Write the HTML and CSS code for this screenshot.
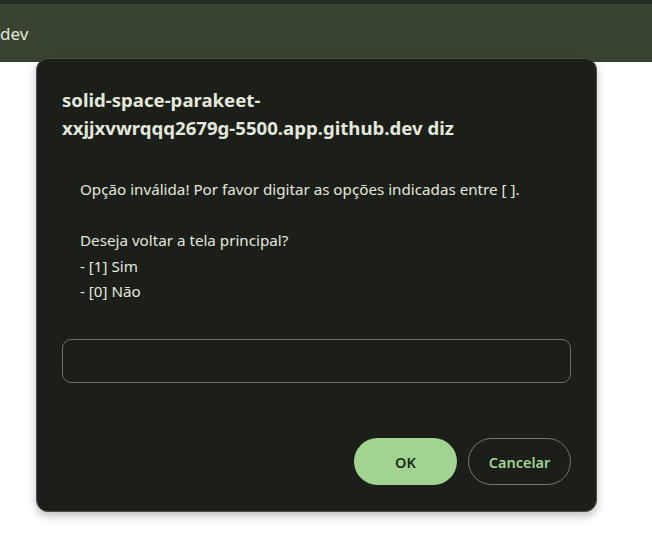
FILE: index.html
```html
<!DOCTYPE html>
<html lang="pt">
<head>
<meta charset="utf-8">
<link rel="stylesheet" href="styles.css">
</head>
<body>
<div class="topstripe"></div>
<header class="bar"><span class="bar-text">dev</span></header>
<main class="page"></main>
<div class="dialog" role="dialog">
  <h1 class="title">solid-space-parakeet-<br>xxjjxvwrqqq2679g-5500.app.github.dev diz</h1>
  <div class="message">
    <p>Opção inválida! Por favor digitar as opções indicadas entre [ ].</p>
    <p class="blank">&nbsp;</p>
    <p>Deseja voltar a tela principal?</p>
    <p>- [1] Sim</p>
    <p>- [0] Não</p>
  </div>
  <input class="field" type="text">
  <div class="actions">
    <button class="btn btn-ok">OK</button>
    <button class="btn btn-cancel">Cancelar</button>
  </div>
</div>
</body>
</html>
```
FILE: styles.css
```css
html, body {
  margin: 0;
  padding: 0;
  background: #ffffff;
  font-family: "Noto Sans", "Open Sans", sans-serif;
}
.topstripe {
  height: 4px;
  background: #252a22;
}
.bar {
  height: 58px;
  background: #384331;
  display: flex;
  align-items: center;
  box-sizing: border-box;
  padding-bottom: 0;
}
.bar-text {
  color: #e2e6dd;
  font-size: 17px;
  margin-left: 0;
}
.dialog {
  position: absolute;
  left: 36px;
  top: 58px;
  width: 561px;
  height: 454px;
  box-sizing: border-box;
  background: #1b1e19;
  border: 1px solid #4a5046;
  border-radius: 12px;
  box-shadow: 0 4px 8px rgba(0,0,0,0.25);
  padding: 27px 25px 26px 25px;
  display: flex;
  flex-direction: column;
}
.title {
  margin: 0;
  color: #e3e8dc;
  font-size: 18.6px;
  font-weight: 700;
  line-height: 28px;
}
.message {
  margin-top: 35px;
  padding-left: 18px;
  color: #e3e8dc;
  font-size: 15.2px;
  line-height: 25.5px;
}
.message p {
  margin: 0;
}
.field {
  margin-top: 34px;
  height: 44px;
  box-sizing: border-box;
  background: transparent;
  border: 1px solid #6b6f66;
  border-radius: 9px;
  width: 100%;
}
.actions {
  margin-top: auto;
  display: flex;
  justify-content: flex-end;
  gap: 11px;
}
.btn {
  width: 103px;
  height: 47px;
  border-radius: 24px;
  font-family: "Noto Sans", sans-serif;
  font-size: 14.5px;
  font-weight: 600;
  cursor: pointer;
}
.btn-ok {
  background: #a1d491;
  border: none;
  color: #1b2a17;
}
.btn-cancel {
  background: transparent;
  border: 1px solid #73786e;
  color: #a1d491;
}
```
